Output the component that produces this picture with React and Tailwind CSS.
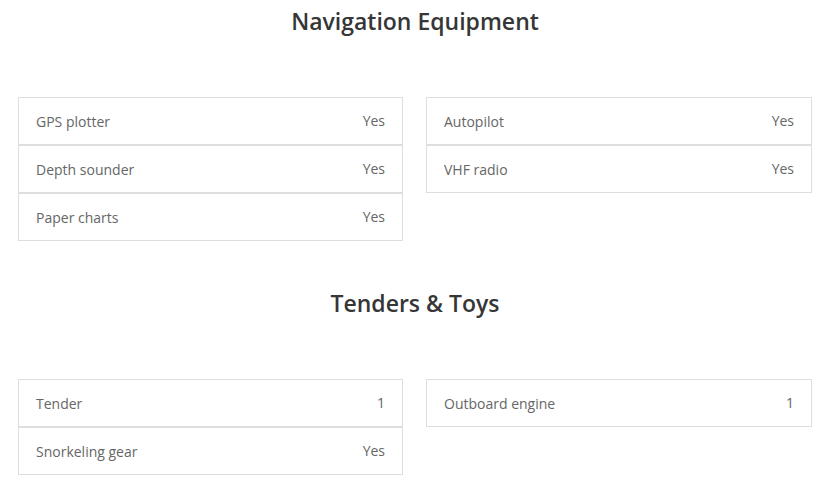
const sections = [
  {
    title: 'Navigation Equipment',
    columns: [
      [
        ['GPS plotter', 'Yes'],
        ['Depth sounder', 'Yes'],
        ['Paper charts', 'Yes'],
      ],
      [
        ['Autopilot', 'Yes'],
        ['VHF radio', 'Yes'],
      ],
    ],
  },
  {
    title: 'Tenders & Toys',
    columns: [
      [
        ['Tender', '1'],
        ['Snorkeling gear', 'Yes'],
      ],
      [['Outboard engine', '1']],
    ],
  },
];

function Row({ label, value }) {
  return (
    <div className="flex h-[48px] items-center justify-between border border-[#dedede] px-[17px] pb-[2px] text-[14px] text-[#666]">
      <span className="pt-[2px]">{label}</span>
      <span>{value}</span>
    </div>
  );
}

export default function App() {
  return (
    <div
      className="min-h-[486px] bg-white pl-[18px] pr-[21px] pt-[5px]"
      style={{ fontFamily: '"Open Sans", "Liberation Sans", sans-serif' }}
    >
      {sections.map((section, i) => (
        <section key={section.title} className={i > 0 ? 'mt-[46px]' : ''}>
          <h2 className="text-center text-[23px] leading-[32px] font-semibold text-[#363636]">
            {section.title}
          </h2>
          <div className="mt-[60px] grid grid-cols-[385px_386px] items-start gap-[23px]">
            {section.columns.map((col, j) => (
              <div key={j} className="flex flex-col">
                {col.map(([label, value]) => (
                  <Row key={label} label={label} value={value} />
                ))}
              </div>
            ))}
          </div>
        </section>
      ))}
    </div>
  );
}
